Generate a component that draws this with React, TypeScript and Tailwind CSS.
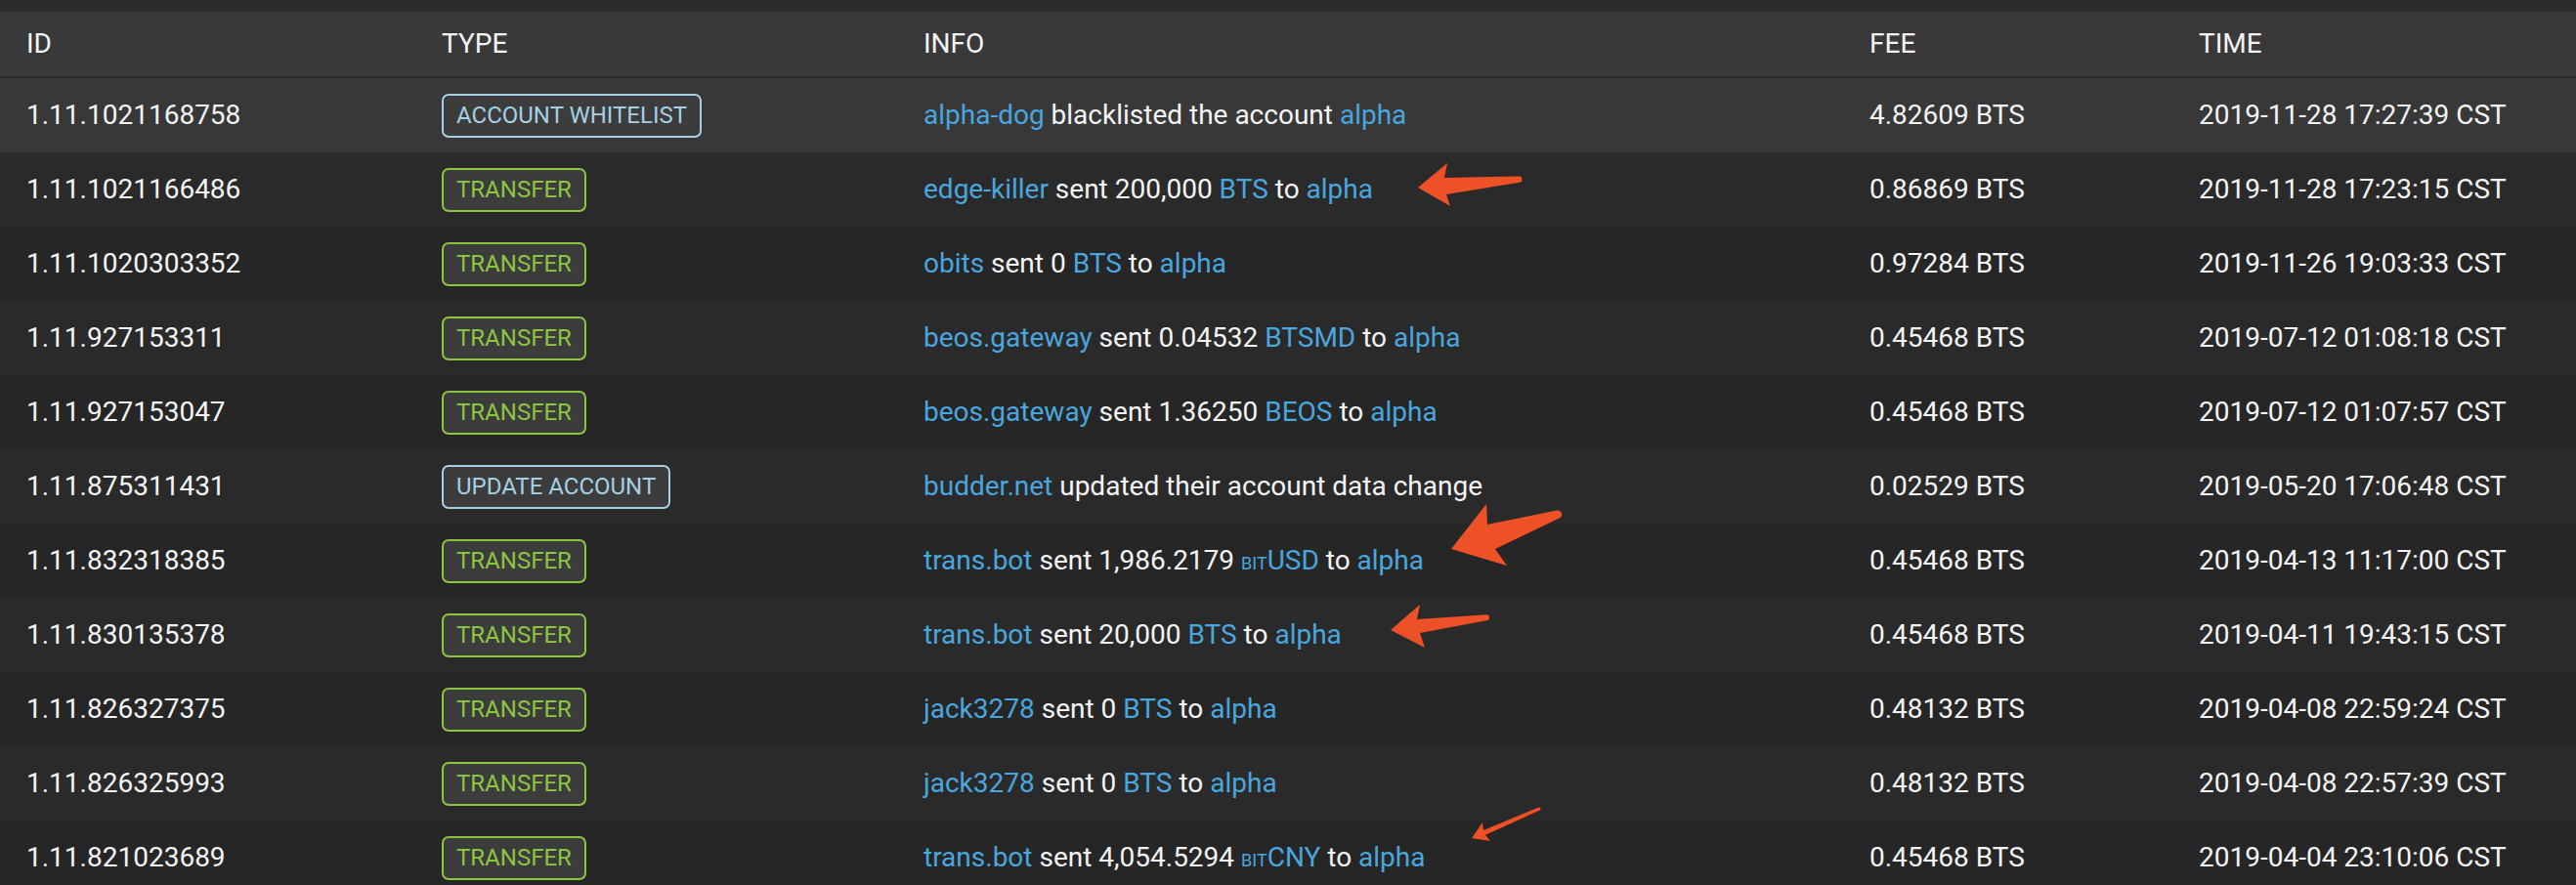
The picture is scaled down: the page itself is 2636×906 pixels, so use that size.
import type { ReactNode } from 'react'

type Kind = 'whitelist' | 'transfer' | 'update'

interface Op {
  id: string
  kind: Kind
  info: ReactNode
  fee: string
  time: string
}

const A = ({ children }: { children: ReactNode }) => (
  <span className="text-[#4aa6de]">{children}</span>
)

const Bit = ({ sym }: { sym: string }) => (
  <A>
    <span className="text-[18px] uppercase">bit</span>
    {sym}
  </A>
)

const sent = (from: string, amount: string, asset: ReactNode) => (
  <>
    <A>{from}</A> sent {amount} {typeof asset === 'string' ? <A>{asset}</A> : asset} to <A>alpha</A>
  </>
)

const ops: Op[] = [
  {
    id: '1.11.1021168758',
    kind: 'whitelist',
    info: (
      <>
        <A>alpha-dog</A> blacklisted the account <A>alpha</A>
      </>
    ),
    fee: '4.82609 BTS',
    time: '2019-11-28 17:27:39 CST',
  },
  { id: '1.11.1021166486', kind: 'transfer', info: sent('edge-killer', '200,000', 'BTS'), fee: '0.86869 BTS', time: '2019-11-28 17:23:15 CST' },
  { id: '1.11.1020303352', kind: 'transfer', info: sent('obits', '0', 'BTS'), fee: '0.97284 BTS', time: '2019-11-26 19:03:33 CST' },
  { id: '1.11.927153311', kind: 'transfer', info: sent('beos.gateway', '0.04532', 'BTSMD'), fee: '0.45468 BTS', time: '2019-07-12 01:08:18 CST' },
  { id: '1.11.927153047', kind: 'transfer', info: sent('beos.gateway', '1.36250', 'BEOS'), fee: '0.45468 BTS', time: '2019-07-12 01:07:57 CST' },
  {
    id: '1.11.875311431',
    kind: 'update',
    info: (
      <>
        <A>budder.net</A> updated their account data change
      </>
    ),
    fee: '0.02529 BTS',
    time: '2019-05-20 17:06:48 CST',
  },
  { id: '1.11.832318385', kind: 'transfer', info: sent('trans.bot', '1,986.2179', <Bit sym="USD" />), fee: '0.45468 BTS', time: '2019-04-13 11:17:00 CST' },
  { id: '1.11.830135378', kind: 'transfer', info: sent('trans.bot', '20,000', 'BTS'), fee: '0.45468 BTS', time: '2019-04-11 19:43:15 CST' },
  { id: '1.11.826327375', kind: 'transfer', info: sent('jack3278', '0', 'BTS'), fee: '0.48132 BTS', time: '2019-04-08 22:59:24 CST' },
  { id: '1.11.826325993', kind: 'transfer', info: sent('jack3278', '0', 'BTS'), fee: '0.48132 BTS', time: '2019-04-08 22:57:39 CST' },
  { id: '1.11.821023689', kind: 'transfer', info: sent('trans.bot', '4,054.5294', <Bit sym="CNY" />), fee: '0.45468 BTS', time: '2019-04-04 23:10:06 CST' },
]

const labels: Record<Kind, string> = {
  whitelist: 'ACCOUNT WHITELIST',
  transfer: 'TRANSFER',
  update: 'UPDATE ACCOUNT',
}

function Badge({ kind }: { kind: Kind }) {
  const green = kind === 'transfer'
  return (
    <span
      className={
        'inline-flex h-[45px] items-center rounded-[7px] border-2 bg-[#3c3c3c] px-[13px] text-[24px] leading-none ' +
        (green ? 'border-[#8cc640] text-[#8cc640]' : 'border-[#a7cfe4] text-[#a7cfe4]')
      }
    >
      {labels[kind]}
    </span>
  )
}

const cols = 'grid grid-cols-[452px_493px_968px_337px_1fr] items-center'

export default function App() {
  return (
    <div className="relative h-[906px] w-[2636px] overflow-hidden bg-[#262626] font-[Roboto,sans-serif] text-[28px] text-[#f4f4f4]">
      <div className="h-[12px] bg-[#2b2b2b]" />
      <div className={cols + ' h-[68px] border-b-2 border-[#2a2a2a] bg-[#393939]'}>
        <div className="pl-[27px]">ID</div>
        <div>TYPE</div>
        <div>INFO</div>
        <div>FEE</div>
        <div>TIME</div>
      </div>

      {ops.map((op, i) => (
        <div
          key={op.id}
          className={
            cols +
            ' h-[76px] ' +
            (i === 0 ? 'bg-[#383838]' : i % 2 === 1 ? 'bg-[#2a2a2a]' : 'bg-[#262626]')
          }
        >
          <div className="pl-[27px]">{op.id}</div>
          <div>
            <Badge kind={op.kind} />
          </div>
          <div className="whitespace-nowrap">{op.info}</div>
          <div>{op.fee}</div>
          <div>{op.time}</div>
        </div>
      ))}

      {/* annotation arrows */}
      <svg className="pointer-events-none absolute left-0 top-0" width="2636" height="906" viewBox="0 0 2636 906">
        <g fill="#ee5128">
          <path d="M1451 192 L1481 167 L1478 182 L1555 180.5 A3.2 3.2 0 0 1 1555 186.8 L1480 199 L1484 211 Z" />
          <path d="M1485 562 L1521 516 L1522 537 L1593 522.6 A4.1 4.1 0 0 1 1595 530.8 L1530 562 L1542 579 Z" />
          <path d="M1423 645 L1453 619 L1450 634 L1521 629.3 A3 3 0 0 1 1521 635.3 L1453 648 L1458 663 Z" />
          <path d="M1506 858 L1517 842 L1518 850 L1574.4 826.6 A1.5 1.5 0 0 1 1575.6 829.4 L1520 854.7 L1525 861 Z" />
        </g>
      </svg>
    </div>
  )
}
